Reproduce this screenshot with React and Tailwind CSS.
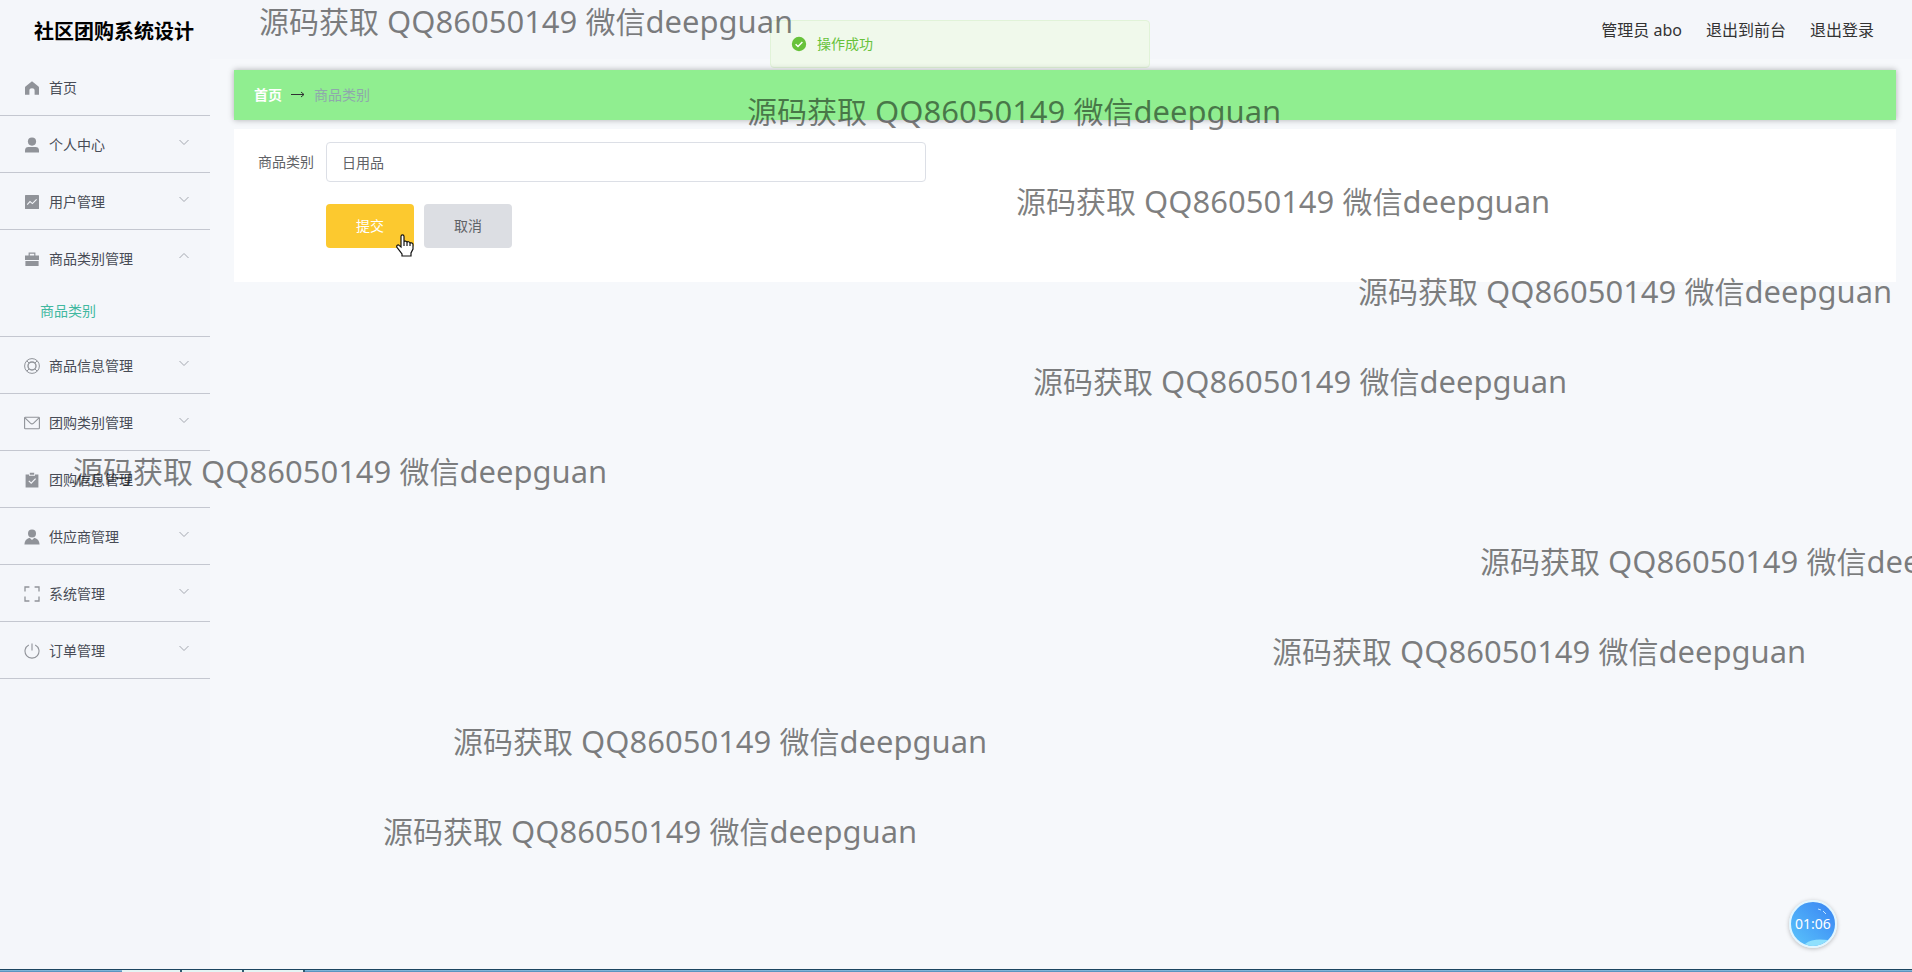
import React from 'react'

// Sidebar icons, drawn on a 16x16 grid
const icons = {
  home: <path fill="currentColor" d="M8 1.2 L14.5 6.6 C14.9 7 15 7.3 15 7.8 V14.8 H10.6 V10.6 C10.6 9 9.6 8.2 8 8.2 C6.4 8.2 5.4 9 5.4 10.6 V14.8 H1 V7.8 C1 7.3 1.1 7 1.5 6.6 Z" />,
  user: (
    <g fill="currentColor">
      <circle cx="8" cy="4.6" r="4.1" />
      <path d="M1 15.4 V13.4 C1 11.2 2.4 10 4.4 10 H11.6 C13.6 10 15 11.2 15 13.4 V15.4 Z" />
    </g>
  ),
  chart: (
    <g>
      <rect x="1" y="1" width="14" height="14" rx="0.6" fill="currentColor" />
      <path d="M3.2 10.6 L6 7.6 L8.4 9.6 L12.6 5.4" fill="none" stroke="#f4f6fa" strokeWidth="1.1" />
    </g>
  ),
  briefcase: (
    <g fill="currentColor">
      <path d="M4.6 4.6 V1.6 H11.4 V4.6 H15 V9 H1 V4.6 Z M5.8 4.6 H10.2 V2.8 H5.8 Z" fillRule="evenodd" />
      <path d="M1.4 10 H14.6 V15 H1.4 Z" />
    </g>
  ),
  help: (
    <g fill="none" stroke="currentColor">
      <circle cx="8" cy="8" r="7.4" />
      <circle cx="8" cy="8" r="4" strokeWidth="1.4" />
      <path d="M2.8 2.8 L5.2 5.2 M13.2 2.8 L10.8 5.2 M2.8 13.2 L5.2 10.8 M13.2 13.2 L10.8 10.8" />
    </g>
  ),
  message: (
    <g fill="none" stroke="currentColor" strokeWidth="1.1">
      <rect x="0.6" y="2.2" width="14.8" height="11.6" rx="0.8" />
      <path d="M1 2.8 L6.4 8.2 C7.4 9.1 8.6 9.1 9.6 8.2 L15 2.8" />
    </g>
  ),
  clipboard: (
    <g>
      <path fill="currentColor" d="M1.6 2.4 H5 V3.8 H11 V2.4 H14.4 V15.6 H1.6 Z M5.8 0.8 H10.2 V2.8 H5.8 Z" />
      <path d="M4.8 8.8 L7.2 11.2 L11.6 6.6" fill="none" stroke="#f4f6fa" strokeWidth="1.2" />
    </g>
  ),
  supplier: (
    <g fill="currentColor">
      <circle cx="8" cy="4.4" r="4" />
      <path d="M5.6 8.8 L8 11 L10.4 8.8 C13.6 9.6 15.4 12 15.6 15.4 H0.4 C0.6 12 2.4 9.6 5.6 8.8 Z" />
    </g>
  ),
  frame: <path fill="none" stroke="currentColor" strokeWidth="1.3" d="M5.4 1 H1 V5.4 M10.6 1 H15 V5.4 M1 10.6 V15 H5.4 M15 10.6 V15 H10.6" />,
  power: <path fill="none" stroke="currentColor" strokeWidth="1.1" d="M8 0.4 V7.6 M4.8 1.9 A7 7 0 1 0 11.2 1.9" />,
}

const menu = [
  { label: '首页', icon: 'home' },
  { label: '个人中心', icon: 'user', arrow: true },
  { label: '用户管理', icon: 'chart', arrow: true },
  { label: '商品类别管理', icon: 'briefcase', arrow: true, children: ['商品类别'] },
  { label: '商品信息管理', icon: 'help', arrow: true },
  { label: '团购类别管理', icon: 'message', arrow: true },
  { label: '团购信息管理', icon: 'clipboard' },
  { label: '供应商管理', icon: 'supplier', arrow: true },
  { label: '系统管理', icon: 'frame', arrow: true },
  { label: '订单管理', icon: 'power', arrow: true },
]

const watermarks = [
  'left-[259px] top-0',
  'left-[747px] top-[90px]',
  'left-[1016px] top-[180px]',
  'left-[1358px] top-[270px]',
  'left-[1033px] top-[360px]',
  'left-[73px] top-[450px]',
  'left-[1480px] top-[540px]',
  'left-[1272px] top-[630px]',
  'left-[453px] top-[720px]',
  'left-[383px] top-[810px]',
]

const Header = () => (
  <header className="flex h-[59px] shrink-0 items-center justify-between bg-[#f4f6fa] pl-[34px] pr-[38px]">
    <h1 className="pt-1 text-xl font-bold text-black">社区团购系统设计</h1>
    <nav className="flex gap-6 text-base text-[#333]">
      <span>管理员 abo</span>
      <a href="#front">退出到前台</a>
      <a href="#logout">退出登录</a>
    </nav>
  </header>
)

const MenuItem = ({ item }) => (
  <li className="border-b border-[#c4c7d0]">
    <button className="flex h-14 w-full items-center pl-6 pr-5 text-left">
      <svg viewBox="0 0 16 16" className="mt-0.5 size-4 text-[#909399]">{icons[item.icon]}</svg>
      <span className="ml-[9px] flex-1 pt-0.5">{item.label}</span>
      {item.arrow && (
        <svg viewBox="0 0 12 12" className="mb-1 size-3 text-[#a4a8b0]" fill="none" stroke="currentColor">
          <path d={item.children ? 'M1.5 8 L6 3.5 L10.5 8' : 'M1.5 4 L6 8.5 L10.5 4'} />
        </svg>
      )}
    </button>
    {item.children?.map((child) => (
      <a key={child} href="#category" className="flex h-[50px] items-center pl-10 text-[#41b8a0]">{child}</a>
    ))}
  </li>
)

const Sidebar = () => (
  <aside className="w-[210px] shrink-0 bg-[#f4f6fa] text-sm text-[#484c56]">
    <ul>
      {menu.map((item) => <MenuItem key={item.label} item={item} />)}
    </ul>
  </aside>
)

const Breadcrumb = () => (
  <div className="relative flex h-[50px] items-center gap-2 bg-[#90ee90] px-5 text-sm shadow-[0_0_6px_rgba(0,0,0,0.3)]">
    <a href="#home" className="font-bold text-white">首页</a>
    <svg viewBox="0 0 16 8" className="mb-0.5 h-2 w-4" fill="none" stroke="#303133">
      <path d="M1 4.5 H14 M11 2 L14 4.5 L11 7" />
    </svg>
    <span className="text-[#8fa8ac]">商品类别</span>
  </div>
)

const CategoryForm = () => (
  <form className="mt-[9px] bg-white pb-[34px] pl-6 pr-5 pt-[13px] text-sm text-[#606266]">
    <div className="flex items-center">
      <label htmlFor="category" className="w-[68px]">商品类别</label>
      <input id="category" type="text" defaultValue="日用品"
        className="h-10 w-[600px] rounded border border-[#dcdfe6] bg-white px-[15px] outline-none" />
    </div>
    <div className="ml-[68px] mt-[22px] flex gap-[10px]">
      <button type="button" className="h-11 w-[88px] rounded bg-[#fcc92f] text-white">提交</button>
      <button type="button" className="h-11 w-[88px] rounded bg-[#dcdee3]">取消</button>
    </div>
  </form>
)

const Toast = () => (
  <div role="status" className="absolute left-1/2 top-5 ml-1 flex h-12 w-[380px] -translate-x-1/2 items-center rounded border
    border-[#e1f3d8] bg-[#f0f9eb] pl-5 text-sm text-[#67c23a]">
    <svg viewBox="0 0 16 16" className="mr-[10px] size-4">
      <circle cx="8" cy="8" r="7.2" fill="currentColor" />
      <path d="M4.6 8.2 L7 10.5 L11.4 6" fill="none" stroke="#fff" strokeWidth="1.4" />
    </svg>
    操作成功
  </div>
)

const Pointer = () => (
  <svg viewBox="0 0 18 23" className="absolute left-[396px] top-[234px] h-[23px] w-[18px]" fill="#fff" stroke="#111" strokeWidth="1.2">
    <path d="M5 13 V2.4 C5 0.4 8 0.4 8 2.4 V8 C8 6.6 11 6.8 11 8.6 C11 7.2 14 7.4 14 9.4 C14 8.4 17 8.6 17 10.4 V15 L15 19 V22 H6 V20 L1 13.4 C0 11.6 2 10.2 3.4 11.6 Z M8 8 V12 M11 8.6 V12 M14 9.4 V12" />
  </svg>
)

const Recorder = () => (
  <div className="absolute bottom-6 right-[75px] flex size-12 items-center justify-center overflow-hidden rounded-full border-2
    border-[#e2f6ff] bg-linear-to-tr from-[#5cc4fb] to-[#3a82f2] text-sm text-white shadow-[0_1px_4px_rgba(0,0,0,0.25)]">
    <svg viewBox="0 0 44 44" className="absolute inset-0 size-full" fill="none">
      <path d="M14 42 C20 37 28 37 37 38 C32 44 20 46 14 42 Z" fill="#8fe0fd" />
      <path d="M27 7 L30 8 M32 9 L35 12" stroke="#c4e6ff" />
    </svg>
    <span className="relative">01:06</span>
  </div>
)

// Top edge of the desktop taskbar with its open windows
const Taskbar = () => (
  <div className="flex h-[3px] shrink-0 border-t border-[#1c4560] bg-linear-to-b from-[#8fc4e4] to-[#4a86b4] pl-[122px]">
    <div className="w-[60px] border-r-2 border-[#2d5a70] bg-[#e4f4f4]"></div>
    <div className="w-[62px] border-r-2 border-[#2d5a70] bg-[#e4f4f4]"></div>
    <div className="w-[61px] border-r-2 border-[#2d5a70] bg-[#e4f4f4]"></div>
  </div>
)

const App = () => {
  return (
    <div className="relative flex min-h-screen flex-col overflow-hidden bg-[#f6f8fb] font-['Noto_Sans','Noto_Sans_CJK_SC',sans-serif]">
      <Header />
      <Toast />
      <div className="flex flex-1">
        <Sidebar />
        <main className="min-w-0 flex-1 pl-6 pr-4 pt-[11px]">
          <Breadcrumb />
          <CategoryForm />
        </main>
      </div>
      <Taskbar />

      {/* Floating overlays */}
      <Pointer />
      <Recorder />
      <div className="pointer-events-none absolute inset-0 overflow-hidden">
        {watermarks.map((place) => (
          <p key={place} className={`absolute whitespace-nowrap text-[30px] leading-[42px] text-black/50 ${place}`}>
            源码获取<span className="text-[31px]"> QQ86050149 </span>微信<span className="text-[31px]">deepguan</span>
          </p>
        ))}
      </div>
    </div>
  )
}

export default App
